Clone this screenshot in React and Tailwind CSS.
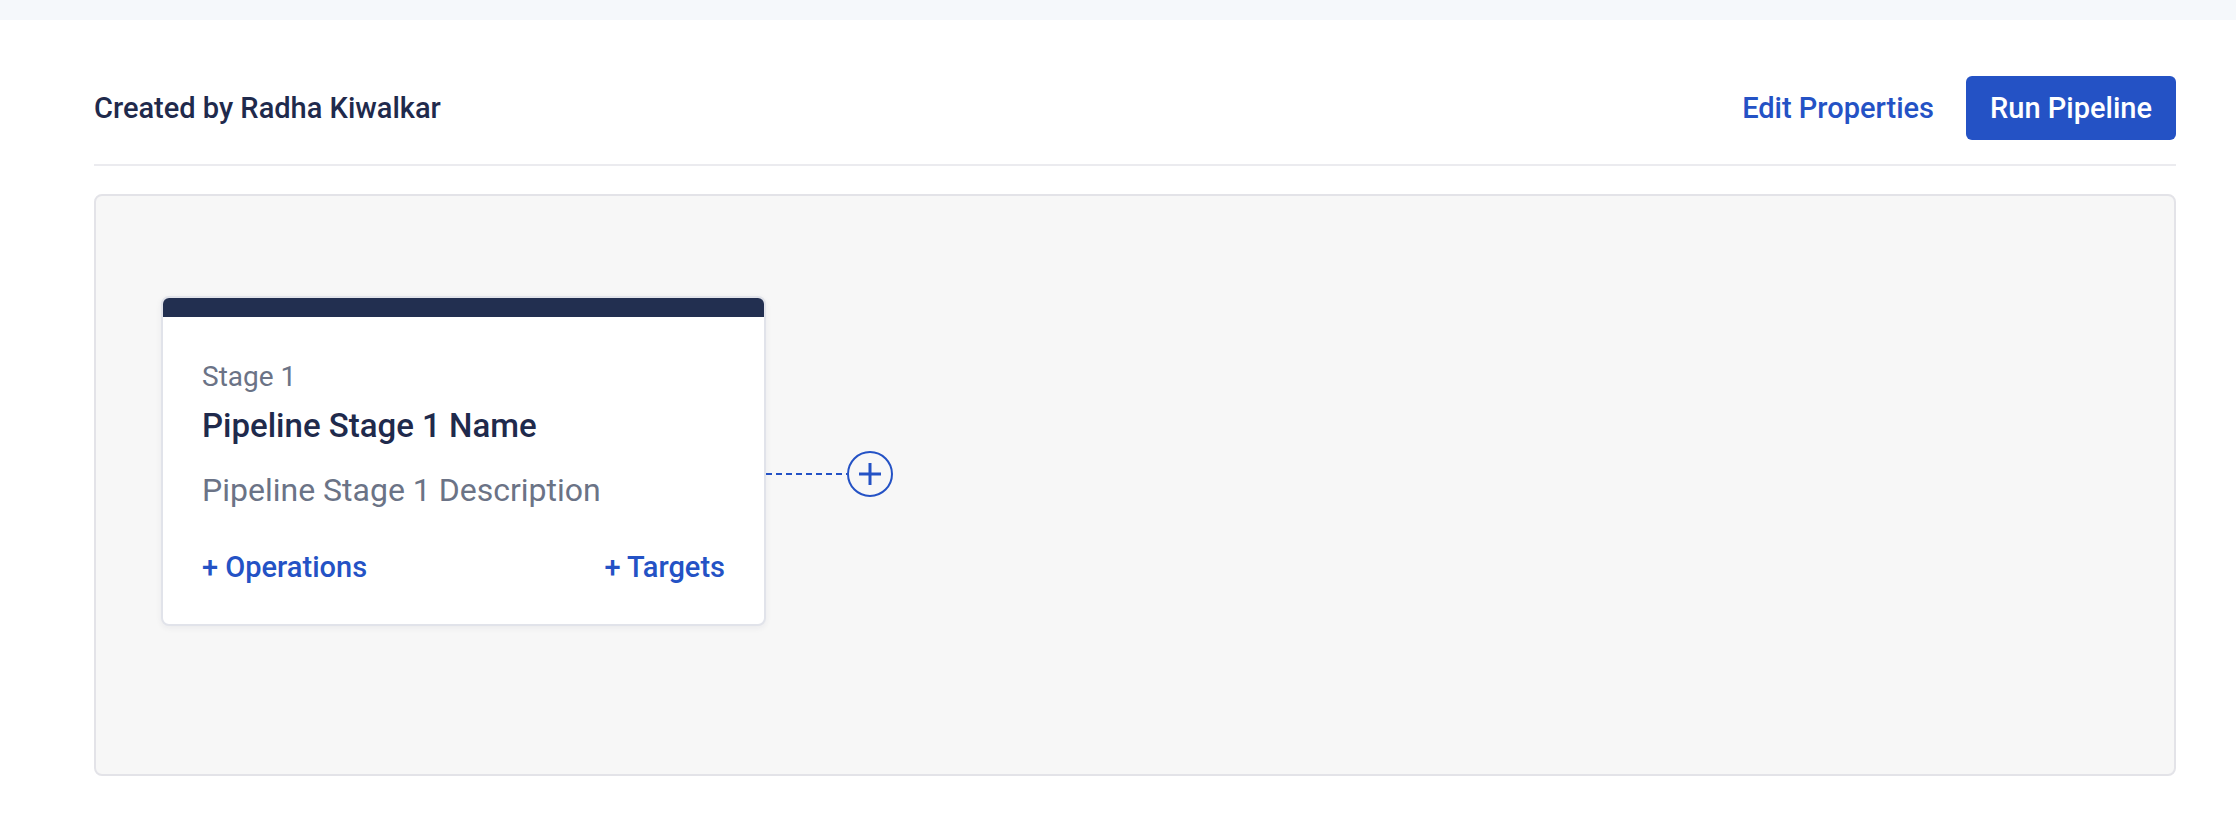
import React from "react";

function PlusCircle() {
  return (
    <svg width="46" height="46" viewBox="0 0 46 46" fill="none">
      <circle cx="23" cy="23" r="22" stroke="#2452c5" strokeWidth="2" />
      <path d="M12 23H34M23 12V34" stroke="#2452c5" strokeWidth="3" />
    </svg>
  );
}

function Connector() {
  return (
    <div className="mt-[155px] flex h-[46px] items-center">
      <svg width="81" height="2" viewBox="0 0 81 2" className="block">
        <line x1="0" y1="1" x2="81" y2="1" stroke="#2452c5" strokeWidth="2" strokeDasharray="6 4" />
      </svg>
      <button type="button" className="flex items-center justify-center">
        <PlusCircle />
      </button>
    </div>
  );
}

function StageCard() {
  return (
    <div className="w-[605px] overflow-hidden rounded-[8px] border-2 border-[#e1e3ea] bg-white shadow-[0_2px_6px_rgba(30,40,70,0.06)]">
      <div className="h-[19px] bg-[#222f50]" />
      <div className="px-[39px] pt-[42px] pb-[39px]">
        <div className="text-[28px] leading-[36px] text-[#6b7386]">Stage 1</div>
        <div className="mt-[11px] text-[33px] font-medium leading-[40px] text-[#1f2a4c]">
          Pipeline Stage 1 Name
        </div>
        <div className="mt-[24px] text-[32px] leading-[40px] text-[#6b7386]">
          Pipeline Stage 1 Description
        </div>
        <div className="mt-[39px] flex items-center justify-between text-[29px] font-medium leading-[36px] text-[#2452c5]">
          <span>+ Operations</span>
          <span>+ Targets</span>
        </div>
      </div>
    </div>
  );
}

export default function App() {
  return (
    <div className="min-h-screen bg-white font-['Roboto',sans-serif]">
      <div className="h-[20px] bg-[#f5f8fb]" />
      <div className="pl-[94px] pr-[60px]">
        <div className="flex items-center justify-between border-b-2 border-[#ebebef] pt-[56px] pb-[24px]">
          <div className="text-[29px] font-medium leading-[36px] text-[#1f2a4c]">
            Created by Radha Kiwalkar
          </div>
          <div className="flex items-center gap-[32px]">
            <button type="button" className="text-[29px] font-medium leading-[36px] text-[#2452c5]">
              Edit Properties
            </button>
            <button
              type="button"
              className="h-[64px] w-[210px] rounded-[6px] bg-[#2452c5] text-[29px] font-medium leading-[36px] text-white"
            >
              Run Pipeline
            </button>
          </div>
        </div>
        <div className="mt-[28px] h-[582px] rounded-[8px] border-2 border-[#e3e3e8] bg-[#f7f7f7] pl-[65px] pt-[100px]">
          <div className="flex items-start">
            <StageCard />
            <Connector />
          </div>
        </div>
      </div>
    </div>
  );
}
